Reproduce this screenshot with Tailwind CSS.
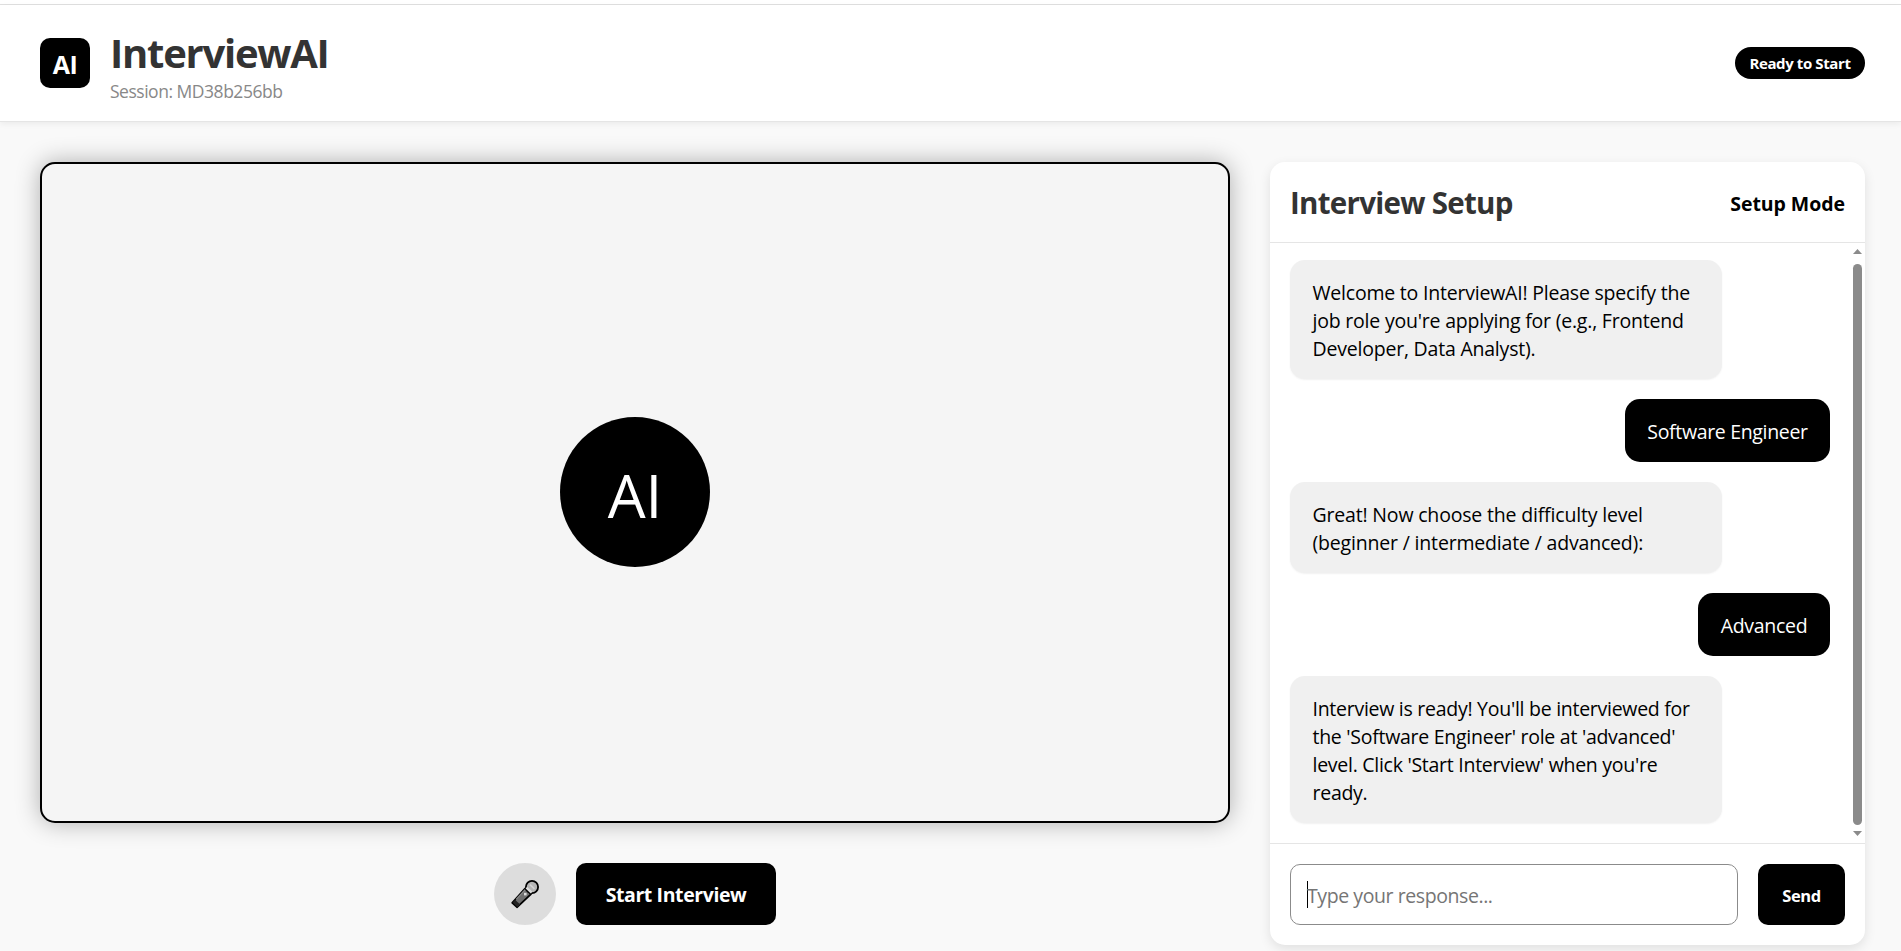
<!doctype html>
<html lang="en">
<head>
  <meta charset="UTF-8" />
  <meta name="viewport" content="width=device-width, initial-scale=1.0" />
  <title>InterviewAI</title>
  <script src="https://cdn.jsdelivr.net/npm/@tailwindcss/browser@4"></script>
</head>
<body class="h-screen overflow-hidden flex flex-col bg-[#f9f9f9] text-black font-['Segoe_UI','Open_Sans',sans-serif]">
  <!-- Top strip -->
  <div class="h-[5px] shrink-0 bg-white border-b border-[#e0e0e0]"></div>

  <!-- Header -->
  <header class="relative h-[117px] shrink-0 flex items-center justify-between pl-10 pr-9 bg-white border-b border-[#e5e5e5] shadow-[0_2px_6px_rgba(0,0,0,0.06)]">
    <div class="flex items-center gap-5">
      <div class="size-[50px] rounded-[10px] bg-black text-white flex items-center justify-center text-[25px] font-bold tracking-[-0.4px] pt-1">AI</div>
      <div class="flex flex-col pt-[6px]">
        <h1 class="text-[40px] leading-[46px] font-bold text-[#333] tracking-[-1.25px] whitespace-nowrap">InterviewAI</h1>
        <p class="mt-[3px] text-[17.5px] leading-6 text-[#888] tracking-[-0.48px] whitespace-nowrap">Session: MD38b256bb</p>
      </div>
    </div>
    <div class="w-[130px] h-8 rounded-full bg-black text-white flex items-center justify-center text-[15px] font-bold tracking-[-0.4px] whitespace-nowrap">Ready to Start</div>
  </header>

  <main class="flex-1 min-h-0 flex gap-10 pl-10 pr-9 pt-10">
    <!-- Video area -->
    <section class="w-[1190px] flex flex-col">
      <div class="h-[661px] shrink-0 flex items-center justify-center pb-px bg-[#f5f5f5] border-2 border-black rounded-[15px] shadow-[0_0_25px_rgba(0,0,0,0.3)]">
        <div class="size-[150px] rounded-full bg-black text-white flex items-center justify-center text-[60px] pt-[5px]">AI</div>
      </div>
      <!-- Controls -->
      <div class="flex justify-center gap-5 mt-10">
        <button class="size-[62px] rounded-full bg-[#ddd] flex items-center justify-center" aria-label="Microphone">
          <svg class="size-[30px]" viewBox="0 0 30 30" fill="none">
            <path d="M2.2 23.8 15 9.5 21 15.2 7.2 28.2Z" fill="#6e6e6e" stroke="#000" stroke-width="1.8" stroke-linejoin="round" />
            <path d="M2.6 23.4 5 20.8 10.2 25.4 7.4 28Z" fill="#222" />
            <path d="M6.2 20.4 15.2 10.6" stroke="#8a8a8a" stroke-width="1.4" />
            <circle cx="22" cy="8" r="6.1" fill="#b5b5b5" stroke="#000" stroke-width="1.8" />
            <path d="M16.4 8.6 21.6 13.6" stroke="#ddd" stroke-width="2.2" />
            <path d="M20 5.6 24.4 9.8" stroke="#d2d2d2" stroke-width="1.6" />
            <path d="M14 13.8h2.6v2.6H14z" fill="#ddd" />
          </svg>
        </button>
        <button class="w-[200px] h-[62px] rounded-[10px] bg-black text-white text-[19.5px] font-bold tracking-[-0.4px] pt-0.5">Start Interview</button>
      </div>
    </section>

    <!-- Chat panel -->
    <aside class="w-[595px] h-[783px] shrink-0 flex flex-col bg-white rounded-[15px] shadow-[0_4px_12px_rgba(0,0,0,0.1)]">
      <div class="h-[81px] shrink-0 flex items-center justify-between px-5 pt-[3px] border-b border-[#e5e5e5]">
        <h2 class="text-[29.5px] font-bold text-[#333] tracking-[-0.72px]">Interview Setup</h2>
        <span class="text-[19.5px] font-bold tracking-[-0.05px]">Setup Mode</span>
      </div>

      <div class="flex-1 min-h-0 flex">
        <div class="flex-1 flex flex-col gap-5 pl-5 pr-[23px] pt-[17px] text-[19.5px] leading-7 whitespace-nowrap">
          <div class="w-[432px] px-[22.5px] pt-[18.5px] pb-[16.5px] rounded-[15px] bg-[#f0f0f0] shadow-[0_1px_2px_rgba(0,0,0,0.06)] tracking-[-0.21px]">Welcome to InterviewAI! Please specify the<br />job role you're applying for (e.g., Frontend<br />Developer, Data Analyst).</div>
          <div class="self-end w-[205px] text-center pt-[18.5px] pb-[16.5px] rounded-[15px] bg-black text-white tracking-[-0.33px]">Software Engineer</div>
          <div class="w-[432px] px-[22.5px] pt-[18.5px] pb-[16.5px] rounded-[15px] bg-[#f0f0f0] shadow-[0_1px_2px_rgba(0,0,0,0.06)] tracking-[-0.18px]">Great! Now choose the difficulty level<br />(beginner / intermediate / advanced):</div>
          <div class="self-end w-[132px] text-center pt-[18.5px] pb-[16.5px] rounded-[15px] bg-black text-white tracking-[-0.3px]">Advanced</div>
          <div class="w-[432px] px-[22.5px] pt-[18.5px] pb-[16.5px] rounded-[15px] bg-[#f0f0f0] shadow-[0_1px_2px_rgba(0,0,0,0.06)] tracking-[-0.27px]">Interview is ready! You'll be interviewed for<br />the 'Software Engineer' role at 'advanced'<br />level. Click 'Start Interview' when you're<br />ready.</div>
        </div>
        <!-- Scrollbar -->
        <div class="w-3 shrink-0 flex flex-col items-start pt-[6px] pb-[7px]">
          <svg class="w-[9px] h-[5px]" viewBox="0 0 9 5"><path d="M4.5 0 9 5H0Z" fill="#8b8b8b" /></svg>
          <div class="w-[9px] flex-1 mt-[10px] mb-[6px] rounded-full bg-[#8b8b8b]"></div>
          <svg class="w-[9px] h-[5px]" viewBox="0 0 9 5"><path d="M0 0H9L4.5 5Z" fill="#8b8b8b" /></svg>
        </div>
      </div>

      <div class="h-[102px] shrink-0 flex gap-5 px-5 pt-5 border-t border-[#e5e5e5]">
        <div class="w-[448px] h-[61px] flex items-center pl-4 border border-[#8b8b8b] rounded-[10px] text-[19.5px] tracking-[-0.42px] text-[#757575]">
          <span class="w-px h-[27px] bg-black"></span>
          <span class="-ml-px pt-0.5">Type your response...</span>
        </div>
        <button class="w-[87px] h-[61px] rounded-[10px] bg-black text-white text-[16.5px] font-bold tracking-[-0.4px] pt-[3px]">Send</button>
      </div>
    </aside>
  </main>
</body>
</html>
